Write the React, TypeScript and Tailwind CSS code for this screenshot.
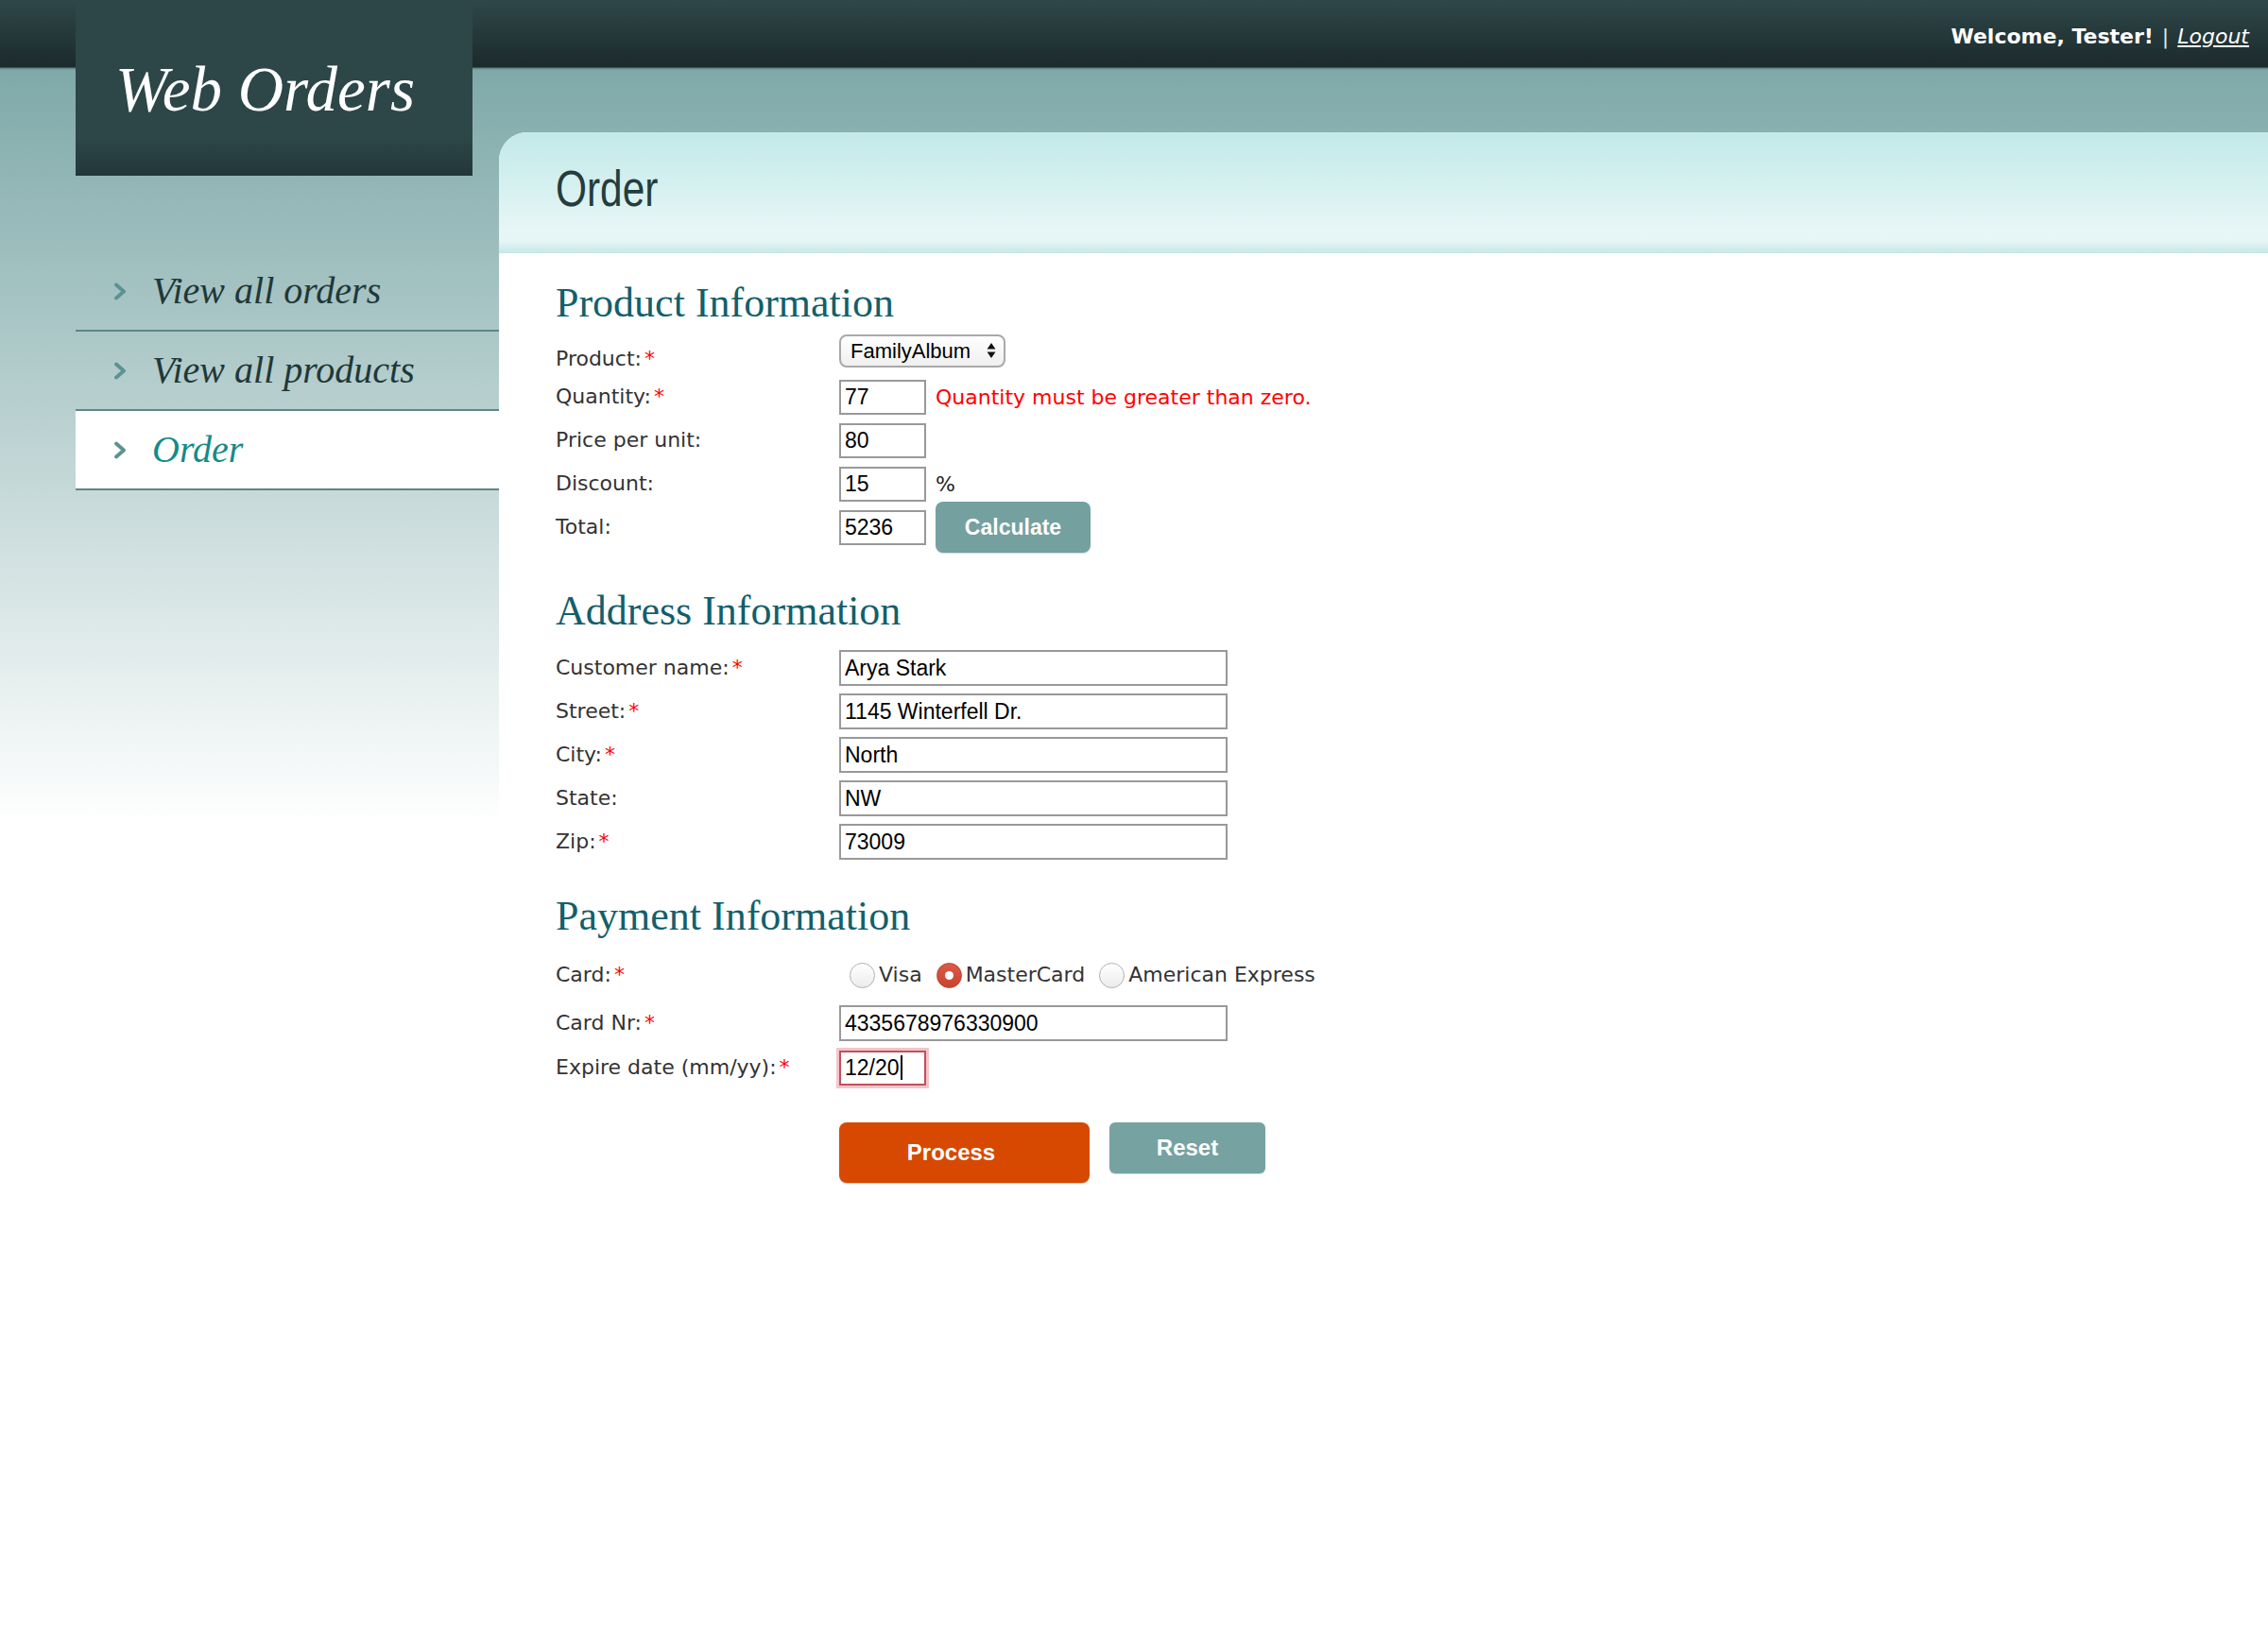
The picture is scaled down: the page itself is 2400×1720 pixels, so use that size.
import React from 'react';

const labelCls = "font-['DejaVu_Sans',Verdana,sans-serif] text-[22px] leading-[26px] text-[#333333]";
const fieldCls = "font-['Liberation_Sans',Arial,sans-serif] text-[23px] text-black bg-white border-2 border-[#999999] px-[4px] outline-none";
const headingCls = "font-['Liberation_Serif',Georgia,serif] text-[44px] leading-[44px] h-[44px] text-[#135f6b]";

function Chevron() {
  return (
    <svg width="14" height="19" viewBox="0 0 14 19" className="shrink-0">
      <polyline points="3,2.5 11,9.5 3,16.5" fill="none" stroke="#5b9292" strokeWidth="3.8" strokeLinecap="round" strokeLinejoin="round" />
    </svg>
  );
}

function Row({ label, req, pad, children }: { label: string; req?: boolean; pad?: string; children?: React.ReactNode }) {
  return (
    <div className="flex items-center h-[46px]">
      <div className={`w-[300px] shrink-0 ${labelCls} ${pad ?? ''}`}>
        {label}
        {req && <span className="ml-[3px] text-[#ff0000]">*</span>}
      </div>
      {children}
    </div>
  );
}

function Radio({ label, checked }: { label: string; checked?: boolean }) {
  return (
    <label className="flex items-center gap-[4px]">
      {checked ? (
        <span className="w-[27px] h-[27px] rounded-full border border-[#b4402f] bg-[linear-gradient(to_bottom,#dd5a47,#c9432f)] flex items-center justify-center">
          <span className="w-[9px] h-[9px] rounded-full bg-white" />
        </span>
      ) : (
        <span className="w-[27px] h-[27px] rounded-full border border-[#b0b0b0] bg-[linear-gradient(to_bottom,#ffffff,#ececec)]" />
      )}
      <span className={labelCls}>{label}</span>
    </label>
  );
}

const navItems = [
  { label: 'View all orders' },
  { label: 'View all products' },
  { label: 'Order', active: true },
];

export default function App() {
  return (
    <div className="min-h-[1720px] w-full flex bg-white bg-no-repeat bg-[linear-gradient(to_bottom,#2e4749_0px,#1c2a2c_71px,#5a7b7b_72px,#7fa9a9_74px,#ffffff_873px)]">
      {/* Sidebar */}
      <div className="w-[528px] shrink-0 pl-[80px]">
        <div className="w-[420px] h-[186px] pl-[42px] pt-[61px] bg-[linear-gradient(to_bottom,#2d4648_0%,#2d4648_78%,#22373a_100%)]">
          <h1 className="font-['Liberation_Serif',Georgia,serif] italic text-[67px] leading-none text-white">Web Orders</h1>
        </div>

        <nav className="mt-[81px] w-[448px]">
          {navItems.map((item) => (
            <a
              key={item.label}
              href="#"
              className={`flex items-center h-[84px] border-b-2 border-[#5f8686] pl-[40px] gap-[27px] ${item.active ? 'bg-white' : ''}`}
            >
              <Chevron />
              <span
                className={`font-['Liberation_Serif',Georgia,serif] italic text-[40px] leading-none ${item.active ? 'text-[#148a8a]' : 'text-[#1f3838]'}`}
              >
                {item.label}
              </span>
            </a>
          ))}
        </nav>
      </div>

      {/* Main */}
      <div className="flex-1 flex flex-col">
        <div className="h-[140px]">
          <div className="h-[72px] flex items-center justify-end pr-[20px] pt-[5px] font-['DejaVu_Sans',Verdana,sans-serif] text-[22px] text-white">
            <span className="font-bold">Welcome, Tester!</span>
            <span className="mx-[9px] text-[#dfe8e8]">|</span>
            <a href="#" className="italic underline">Logout</a>
          </div>
        </div>

        <div className="flex-1 bg-white rounded-tl-[30px] overflow-hidden">
          <div className="h-[128px] pl-[60px] pt-[33px] bg-[linear-gradient(to_bottom,#c3e9e9_0%,#d6f0f0_45%,#e8f6f6_82%,#e6f5f5_90%,#c5e7e8_100%)]">
            <h2 className="inline-block origin-left scale-x-[0.8] font-['Liberation_Sans',Arial,sans-serif] text-[53px] leading-none text-[#233d3e]">Order</h2>
          </div>

          <div className="pl-[60px] pt-[31px]">
            {/* Product Information */}
            <h3 className={headingCls}>Product Information</h3>
            <div className="mt-[8px]">
              <Row label="Product:" req pad="pt-[12px]">
                <div className="mb-[6px] w-[176px] h-[35px] rounded-[8px] border-2 border-[#a9a9a9] bg-[linear-gradient(to_bottom,#ffffff,#efefef)] flex items-center justify-between pl-[10px] pr-[8px] font-['Liberation_Sans',Arial,sans-serif] text-[22px] text-black">
                  <span>FamilyAlbum</span>
                  <svg width="10" height="18" viewBox="0 0 10 18">
                    <polygon points="5,1 9.5,7.5 0.5,7.5" fill="#111" />
                    <polygon points="0.5,10.5 9.5,10.5 5,17" fill="#111" />
                  </svg>
                </div>
              </Row>
              <Row label="Quantity:" req>
                <input readOnly defaultValue="77" className={`w-[92px] h-[37px] ${fieldCls}`} />
                <span className="ml-[10px] font-['DejaVu_Sans',Verdana,sans-serif] text-[22px] text-[#ff0000]">Quantity must be greater than zero.</span>
              </Row>
              <Row label="Price per unit:">
                <input readOnly defaultValue="80" className={`w-[92px] h-[37px] ${fieldCls}`} />
              </Row>
              <Row label="Discount:">
                <input readOnly defaultValue="15" className={`w-[92px] h-[37px] ${fieldCls}`} />
                <span className="ml-[10px] font-['DejaVu_Sans',Verdana,sans-serif] text-[22px] text-[#222222]">%</span>
              </Row>
              <Row label="Total:">
                <input readOnly defaultValue="5236" className={`w-[92px] h-[37px] ${fieldCls}`} />
                <button className="ml-[10px] w-[164px] h-[54px] rounded-[8px] bg-[#74a0a0] shadow-[0_1px_1px_rgba(0,0,0,0.15)] text-white font-bold text-[23px] font-['Liberation_Sans',Arial,sans-serif]">
                  Calculate
                </button>
              </Row>
            </div>

            {/* Address Information */}
            <h3 className={`mt-[44px] ${headingCls}`}>Address Information</h3>
            <div className="mt-[15px]">
              <Row label="Customer name:" req>
                <input readOnly defaultValue="Arya Stark" className={`w-[411px] h-[38px] ${fieldCls}`} />
              </Row>
              <Row label="Street:" req>
                <input readOnly defaultValue="1145 Winterfell Dr." className={`w-[411px] h-[38px] ${fieldCls}`} />
              </Row>
              <Row label="City:" req>
                <input readOnly defaultValue="North" className={`w-[411px] h-[38px] ${fieldCls}`} />
              </Row>
              <Row label="State:">
                <input readOnly defaultValue="NW" className={`w-[411px] h-[38px] ${fieldCls}`} />
              </Row>
              <Row label="Zip:" req>
                <input readOnly defaultValue="73009" className={`w-[411px] h-[38px] ${fieldCls}`} />
              </Row>
            </div>

            {/* Payment Information */}
            <h3 className={`mt-[34px] ${headingCls}`}>Payment Information</h3>
            <div className="mt-[17px]">
              <Row label="Card:" req>
                <div className="ml-[11px] flex items-center gap-[15px]">
                  <Radio label="Visa" />
                  <Radio label="MasterCard" checked />
                  <Radio label="American Express" />
                </div>
              </Row>
              <div className="mt-[5px]">
                <Row label="Card Nr:" req>
                  <input readOnly defaultValue="4335678976330900" className={`w-[411px] h-[38px] ${fieldCls}`} />
                </Row>
              </div>
              <div className="mt-[1px]">
                <Row label="Expire date (mm/yy):" req>
                  <div className="w-[92px] h-[37px] flex items-center px-[4px] bg-white border-2 border-[#c2505c] shadow-[0_0_0_3px_rgba(232,140,150,0.5)] font-['Liberation_Sans',Arial,sans-serif] text-[23px] text-black">
                    12/20
                    <span className="ml-[1px] w-[2px] h-[26px] bg-black" />
                  </div>
                </Row>
              </div>
            </div>

            <div className="mt-[35px] pl-[300px] flex items-start gap-[21px]">
              <button className="w-[265px] h-[64px] pr-[28px] rounded-[8px] bg-[#d74900] shadow-[0_1px_1px_rgba(0,0,0,0.2)] text-white font-bold text-[24px] font-['Liberation_Sans',Arial,sans-serif]">
                Process
              </button>
              <button className="w-[165px] h-[54px] rounded-[6px] bg-[#76a2a2] shadow-[0_1px_1px_rgba(0,0,0,0.15)] text-white font-bold text-[24px] font-['Liberation_Sans',Arial,sans-serif]">
                Reset
              </button>
            </div>
          </div>
        </div>
      </div>
    </div>
  );
}
